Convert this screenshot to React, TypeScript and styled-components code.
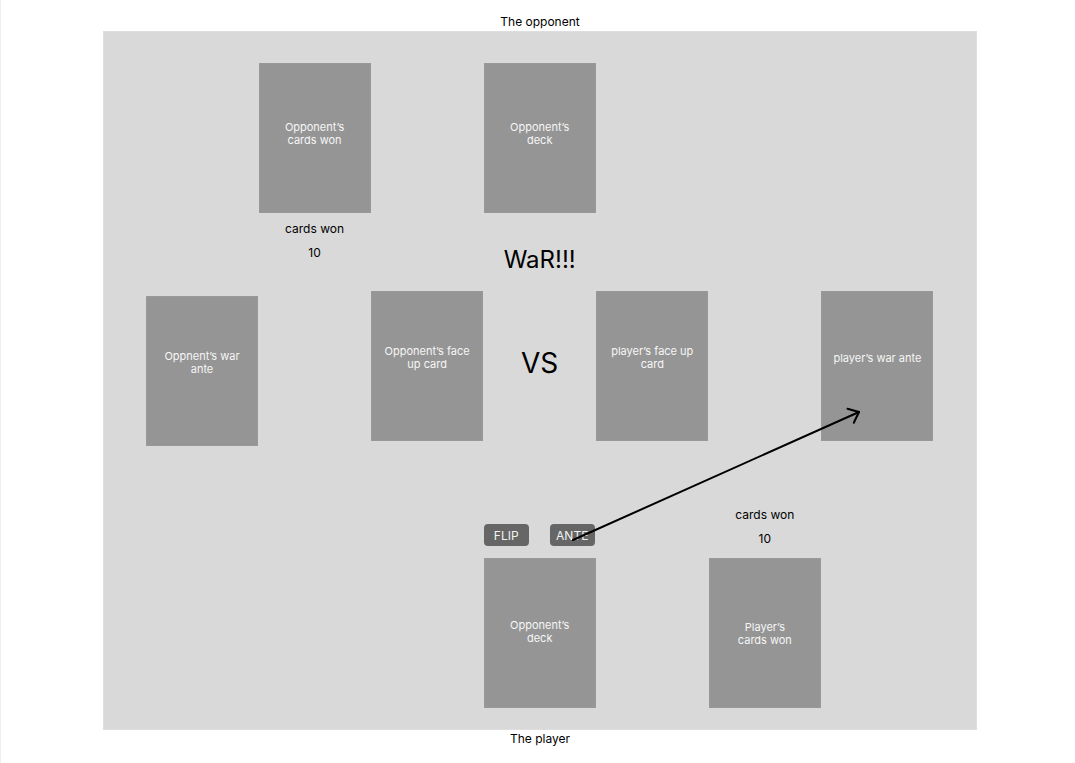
import React from "react";
import styled, { createGlobalStyle } from "styled-components";

const Global = createGlobalStyle`
  html, body { margin: 0; padding: 0; background: #ffffff; }
  body { font-family: Inter, "Noto Sans", "Liberation Sans", sans-serif; color: #000; }
`;

const Page = styled.div`
  width: 1075px;
  height: 763px;
  box-sizing: border-box;
  border-left: 1px solid #efefef;
  padding: 14px 0 0 102px;
  display: flex;
  flex-direction: column;
  align-items: flex-start;
`;

const Column = styled.div`
  width: 874px;
  display: flex;
  flex-direction: column;
  align-items: center;
`;

const SideLabel = styled.div<{ $gapTop?: number; $gapBottom?: number }>`
  font-size: 12px;
  line-height: 15px;
  margin-top: ${(p) => p.$gapTop ?? 0}px;
  margin-bottom: ${(p) => p.$gapBottom ?? 0}px;
`;

const Board = styled.div`
  position: relative;
  width: 874px;
  height: 699px;
  box-sizing: border-box;
  background: #d9d9d9;
  box-shadow: inset 0 0 0 1px #dedede;
  padding: 32px 43px 22px 43px;
  display: grid;
  grid-template-columns: repeat(7, 1fr);
  grid-template-rows: 150px 78px 150px 117px 150px;
`;

type Cell = { $col: number; $row: number };

const Card = styled.div<Cell & { $textTop: number; $shift?: number }>`
  grid-column: ${(p) => p.$col};
  grid-row: ${(p) => p.$row};
  width: 112px;
  height: 150px;
  margin-top: ${(p) => p.$shift ?? 0}px;
  box-sizing: border-box;
  background: #959595;
  box-shadow: inset 0 0 0 1px #999999;
  padding-top: ${(p) => p.$textTop}px;
  color: #f5f5f5;
  font-size: 11px;
  line-height: 13px;
  text-align: center;
`;

const Stat = styled.div<Cell & { $top?: number; $bottom?: number }>`
  grid-column: ${(p) => p.$col};
  grid-row: ${(p) => p.$row};
  align-self: ${(p) => (p.$bottom !== undefined ? "end" : "start")};
  margin-top: ${(p) => p.$top ?? 0}px;
  margin-bottom: ${(p) => p.$bottom ?? 0}px;
  width: 112px;
  display: flex;
  flex-direction: column;
  align-items: center;
  gap: 9px;
  font-size: 12px;
  line-height: 15px;
`;

const Heading = styled.div<Cell & { $size: number; $top: number }>`
  grid-column: ${(p) => p.$col};
  grid-row: ${(p) => p.$row};
  width: 112px;
  margin-top: ${(p) => p.$top}px;
  align-self: start;
  text-align: center;
  font-size: ${(p) => p.$size}px;
  line-height: ${(p) => Math.round(p.$size * 1.2)}px;
  white-space: nowrap;
`;

const Controls = styled.div<Cell>`
  grid-column: ${(p) => p.$col};
  grid-row: ${(p) => p.$row};
  width: 111px;
  align-self: end;
  margin-bottom: 12px;
  display: flex;
  justify-content: space-between;
`;

const Button = styled.button`
  width: 45px;
  height: 22px;
  border: none;
  border-radius: 4px;
  background: #666666;
  color: #f2f2f2;
  font-family: inherit;
  font-size: 12px;
  padding: 0;
  cursor: pointer;
`;

const ArrowLayer = styled.svg`
  position: absolute;
  left: 0;
  top: 0;
  width: 874px;
  height: 699px;
  pointer-events: none;
  overflow: visible;
`;

export default function App() {
  // arrow coordinates relative to the board
  const x1 = 470, y1 = 509, x2 = 756, y2 = 381;
  return (
    <>
      <Global />
      <Page>
        <Column>
          <SideLabel $gapBottom={2}>The opponent</SideLabel>
          <Board>
            <Card $col={2} $row={1} $textTop={58}>Opponent’s<br />cards won</Card>
            <Card $col={4} $row={1} $textTop={58}>Opponent’s<br />deck</Card>

            <Stat $col={2} $row={2} $top={8}>
              <span>cards won</span>
              <span>10</span>
            </Stat>
            <Heading $col={4} $row={2} $size={24} $top={32}>WaR!!!</Heading>

            <Card $col={1} $row={3} $textTop={54} $shift={5}>Oppnent’s war<br />ante</Card>
            <Card $col={3} $row={3} $textTop={54}>Opponent’s face<br />up card</Card>
            <Heading $col={4} $row={3} $size={28} $top={55}>VS</Heading>
            <Card $col={5} $row={3} $textTop={54}>player’s face up<br />card</Card>
            <Card $col={7} $row={3} $textTop={61}>player’s war ante</Card>

            <Controls $col={4} $row={4}>
              <Button>FLIP</Button>
              <Button>ANTE</Button>
            </Controls>
            <Stat $col={6} $row={4} $bottom={12}>
              <span>cards won</span>
              <span>10</span>
            </Stat>

            <Card $col={4} $row={5} $textTop={61}>Opponent’s<br />deck</Card>
            <Card $col={6} $row={5} $textTop={63}>Player’s<br />cards won</Card>

            <ArrowLayer viewBox="0 0 874 699">
              <line x1={x1} y1={y1} x2={x2} y2={y2} stroke="#000" strokeWidth={2} strokeLinecap="round" />
              <polyline
                points={`${x2 - 11.5},${y2 - 3.3} ${x2},${y2} ${x2 - 5.2},${y2 + 10.8}`}
                fill="none"
                stroke="#000"
                strokeWidth={2}
                strokeLinecap="round"
                strokeLinejoin="round"
              />
            </ArrowLayer>
          </Board>
          <SideLabel $gapTop={1}>The player</SideLabel>
        </Column>
      </Page>
    </>
  );
}
